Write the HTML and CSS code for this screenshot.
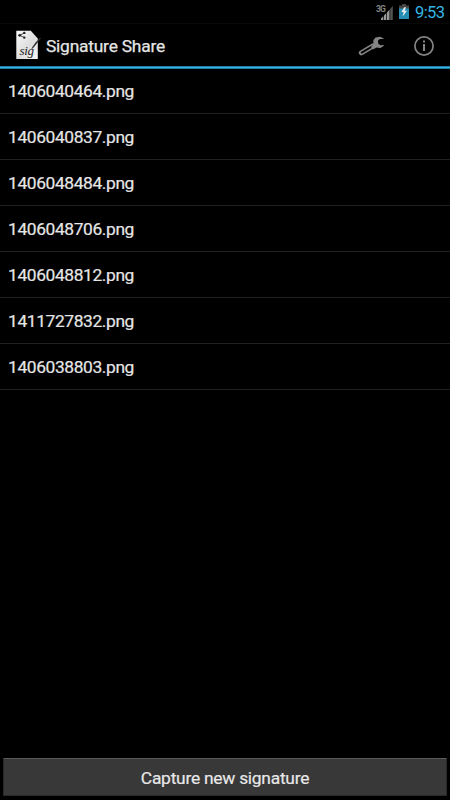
FILE: index.html
```html
<!DOCTYPE html>
<html lang="en">
<head>
<meta charset="utf-8">
<title>Signature Share</title>
<link rel="stylesheet" href="styles.css">
</head>
<body>
<div class="screen">
  <div class="status">
    <svg class="signal" width="18" height="18" viewBox="0 0 18 18">
      <path d="M17 1.500V16H4.500Z" fill="#303030"/>
      <path d="M5 16v-1.500l2-2V16zM8 16v-4.500l2-2V16zM11 16V8.500l2.300-2.500V16z" fill="#999"/>
      <path d="M14.500 16V5l2-2.300V16z" fill="#555"/>
      <text class="network" x="0" y="8">3G</text>
    </svg>
    <svg class="battery" width="10" height="15" viewBox="0 0 10 15">
      <path d="M3 0h4v1.500h3V5H0V1.500h3z" fill="#454545"/>
      <path d="M0 4.500h10V15H0z" fill="#258eb5"/>
      <path d="M5.500 3 2.300 8h2.300l-1 4.500L8 6.800H5.600L7 3.500z" fill="#eee"/>
    </svg>
    <span class="clock">9:53</span>
  </div>
  <header class="bar">
    <svg class="logo" width="26" height="30" viewBox="0 0 26 30">
      <defs><linearGradient id="paper" x2="1" y2="1"><stop stop-color="#fafafa"/><stop offset=".55" stop-color="#dedede"/><stop offset="1" stop-color="#f7f7f7"/></linearGradient></defs>
      <path d="M1.300.800h14.500l7 7.700V29H1.300z" fill="url(#paper)"/>
      <path d="m9.500 3-5 2.300 5 2.300" fill="none" stroke="#222" stroke-width=".8"/>
      <g fill="#222"><circle cx="9.300" cy="2.900" r="1.200"/><circle cx="4.700" cy="5.300" r="1.400"/><circle cx="9.300" cy="7.600" r="1.200"/></g>
      <text class="scribble" x="4.500" y="24.500">sig</text>
      <path d="m26 8-1-.3-4.500 4.800-3.200 4.500-1.300 2.800 2.400-2 4-5z" fill="#333"/>
    </svg>
    <h1 class="title">Signature Share</h1>
    <svg class="wrench" width="28" height="22" viewBox="0 0 28 22">
      <path d="M4.300 16.800 16 9.800" stroke="#858585" stroke-width="5" stroke-linecap="round"/>
      <path d="M4.700 16.600 15.500 10.200" stroke="#000" stroke-width="1.900" stroke-linecap="round"/>
      <path d="M26.500 2.200 23 .8 18.500 1.500 16.300 4.300l.2 4L14 11l2 2.500 3.500-2 4 .6 3.300-2.300V9l-3.600.2-2-1.700-.2-3 2-1.600 3.500.1z" fill="#858585"/>
    </svg>
    <svg class="info" width="22" height="22" viewBox="0 0 22 22">
      <circle cx="11" cy="11" r="9.100" fill="none" stroke="#858585" stroke-width="1.700"/>
      <path d="M10 5.500h2v2h-2zM10 9h2v7h-2z" fill="#858585"/>
    </svg>
  </header>
  <ul class="files">
    <li>1406040464.png</li>
    <li>1406040837.png</li>
    <li>1406048484.png</li>
    <li>1406048706.png</li>
    <li>1406048812.png</li>
    <li>1411727832.png</li>
    <li>1406038803.png</li>
  </ul>
  <button class="capture">Capture new signature</button>
</div>
</body>
</html>
```
FILE: styles.css
```css
* { box-sizing: border-box; }
body { margin: 0; background: #000; color: #e6e6e6; font-family: Roboto, sans-serif; }
.screen { display: flex; flex-direction: column; height: 800px; }
.status { display: flex; justify-content: flex-end; align-items: center; height: 23px; padding-right: 6px; }
.signal { margin: 3px 5px 0 0; }
.network { font: 700 8.500px "Liberation Sans Narrow", Roboto, sans-serif; letter-spacing: -.8px; fill: #858585; }
.scribble { font: italic 13px "Liberation Serif", serif; letter-spacing: -.3px; fill: #222; }
.battery { margin-right: 6px; }
.clock { width: 29px; padding-top: 1px; color: #33b5e5; font-size: 16.500px; letter-spacing: -.6px; line-height: 23px; white-space: nowrap; }
.bar { display: flex; align-items: center; height: 46px; padding: 0 15px; border-top: 1px solid #080808; border-bottom: 3px solid #1f7ea3; background: linear-gradient(#33b5e5, #33b5e5) 0 43px / 100% 1px no-repeat border-box; border-image: linear-gradient(#080808 0 43px, #1f7ea3 43px 44px, #33b5e5 44px 45px, #1f7ea3 45px) 1 0 3 0; }
.logo { margin-right: 5px; }
.title { flex: 1; margin: 2px 0 0; font-size: 17.400px; font-weight: 400; letter-spacing: -.22px; line-height: 22px; white-space: nowrap; -webkit-text-stroke: .25px currentColor; }
.wrench { margin: 3px 28px 0 0; }
.info { margin: 1px 0 0; }
.bar { background: none; }
.files { flex: 1; margin: 0; padding: 0; list-style: none; }
.files li { height: 46px; padding-left: 8px; border-bottom: 1px solid #202020; font-size: 17.400px; letter-spacing: -.39px; line-height: 46px; -webkit-text-stroke: .2px currentColor; }
.files li:first-child { height: 45px; line-height: 45px; }
.capture { height: 38px; margin: 0 3px 4px; padding: 2px 0 0; background: #383838; border: 1px solid #292929; border-top: 1px solid #5a5a5a; border-radius: 1px; color: #e8e8e8; font: 17.400px Roboto, sans-serif; letter-spacing: -.25px; -webkit-text-stroke: .2px currentColor; }
```
